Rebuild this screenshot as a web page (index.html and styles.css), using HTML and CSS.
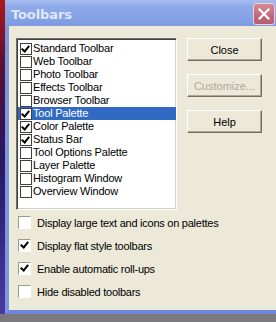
FILE: index.html
```html
<!DOCTYPE html>
<html lang="en">
<head>
  <meta charset="UTF-8" />
  <title>Toolbars</title>
  <link rel="stylesheet" href="styles.css">
</head>
<body>
  <div class="screen">
    <div class="desktop-strip"></div>
    <div class="window">
      <div class="titlebar">
        <span class="title">Toolbars</span>
        <span class="close-x">
          <svg width="20" height="20" viewBox="0 0 20 20">
            <path d="M5.5 5.5 L14.5 14.5 M14.5 5.5 L5.5 14.5" stroke="#fff" stroke-width="2.2" stroke-linecap="square" />
          </svg>
        </span>
      </div>
      <div class="dialog">
        <div class="top-row">
          <ul class="listbox">
            <li class="item"><span class="box checked"></span>Standard Toolbar</li>
            <li class="item"><span class="box"></span>Web Toolbar</li>
            <li class="item"><span class="box"></span>Photo Toolbar</li>
            <li class="item"><span class="box"></span>Effects Toolbar</li>
            <li class="item"><span class="box"></span>Browser Toolbar</li>
            <li class="item selected"><span class="box checked"></span>Tool Palette</li>
            <li class="item"><span class="box checked"></span>Color Palette</li>
            <li class="item"><span class="box checked"></span>Status Bar</li>
            <li class="item"><span class="box"></span>Tool Options Palette</li>
            <li class="item"><span class="box"></span>Layer Palette</li>
            <li class="item"><span class="box"></span>Histogram Window</li>
            <li class="item"><span class="box"></span>Overview Window</li>
          </ul>
          <div class="buttons">
            <button class="btn">Close</button>
            <button class="btn disabled">Customize...</button>
            <button class="btn">Help</button>
          </div>
        </div>
        <div class="options">
          <label class="option"><span class="cb"></span>Display large text and icons on palettes</label>
          <label class="option"><span class="cb checked"></span>Display flat style toolbars</label>
          <label class="option"><span class="cb checked"></span>Enable automatic roll-ups</label>
          <label class="option"><span class="cb"></span>Hide disabled toolbars</label>
        </div>
      </div>
    </div>
  </div>
  <div class="taskbar"></div>
</body>
</html>
```

FILE: styles.css
```css
body {
  margin: 0;
  width: 276px;
  height: 322px;
  overflow: hidden;
  background: #7d7d80;
  font-family: 'Liberation Sans', Arial, sans-serif;
  font-size: 11px;
  letter-spacing: -0.2px;
  color: #000;
}

.screen {
  display: flex;
  height: 314px;
}

.desktop-strip {
  width: 5px;
  flex: none;
  background: linear-gradient(180deg, #b01a1a 0%, #5a1030 20%, #2a1560 50%, #3c2a8a 80%, #4a3aa0 100%);
}

.window {
  flex: 1;
  display: flex;
  flex-direction: column;
  border-left: 4px solid #7b97e0;
  border-bottom: 4px solid #6f86d8;
  box-shadow: inset 1px 0 0 #aebee8;
}

.titlebar {
  height: 26px;
  flex: none;
  display: flex;
  align-items: center;
  justify-content: space-between;
  padding: 0 1px 0 6px;
  margin-left: -4px;
  background: linear-gradient(180deg, #a7bdf0 0%, #8eaaea 25%, #86a2e6 70%, #7d99e0 100%);
}

.title {
  color: #dfe8fb;
  font-weight: bold;
  font-size: 13px;
  font-family: 'DejaVu Sans', sans-serif;
  letter-spacing: -0.1px;
  margin-top: 2px;
}

.close-x {
  width: 20px;
  height: 20px;
  border: 1px solid #e8d2dc;
  border-radius: 3px;
  background: linear-gradient(180deg, #d78a95 0%, #c0687a 60%, #b45d72 100%);
  display: flex;
  margin-top: 1px;
}

.dialog {
  flex: 1;
  background: #ece9d8;
  padding: 12px 0 0 7px;
  display: flex;
  flex-direction: column;
}

.top-row {
  display: flex;
  gap: 10px;
}

.listbox {
  list-style: none;
  margin: 0;
  width: 158px;
  height: 167px;
  padding: 3px 0 0 1px;
  background: #fff;
  border: 1px solid;
  border-color: #716f64 #fff #fff #716f64;
  box-shadow: inset 1px 1px 0 #404040, inset -1px -1px 0 #d4d0c8;
}

.item {
  height: 13px;
  line-height: 13px;
  display: flex;
  align-items: center;
  white-space: nowrap;
  padding-left: 2px;
}

.item.selected {
  background: #316ac5;
  color: #fff;
}

.box {
  width: 10px;
  height: 10px;
  border: 1px solid #404040;
  background: #fff;
  margin-right: 1px;
  flex: none;
  position: relative;
}

.box.checked::after,
.cb.checked::after {
  content: '';
  position: absolute;
  left: 2px;
  top: 0px;
  width: 3px;
  height: 6px;
  border: solid #000;
  border-width: 0 2px 2px 0;
  transform: rotate(40deg);
}

.buttons {
  display: flex;
  flex-direction: column;
  gap: 13px;
}

.btn {
  width: 75px;
  height: 23px;
  background: #ece9d8;
  border: 1px solid;
  border-color: #fff #716f64 #716f64 #fff;
  box-shadow: inset -1px -1px 0 #aca899;
  font-family: 'Liberation Sans', Arial, sans-serif;
  font-size: 11px;
  color: #000;
  padding: 0;
}

.btn.disabled {
  color: #aca899;
}

.options {
  display: flex;
  flex-direction: column;
  gap: 10px;
  margin-top: 6px;
  padding-left: 2px;
  letter-spacing: -0.25px;
}

.option {
  display: flex;
  align-items: center;
  height: 13px;
  white-space: nowrap;
}

.cb {
  width: 11px;
  height: 11px;
  border: 1px solid;
  border-color: #9d9a8c #fff #fff #9d9a8c;
  background: #fff;
  margin-right: 6px;
  position: relative;
  flex: none;
}

.cb.checked::after {
  left: 3px;
  top: 0px;
}

.taskbar {
  height: 8px;
  background: #7a7a7e;
}
```
